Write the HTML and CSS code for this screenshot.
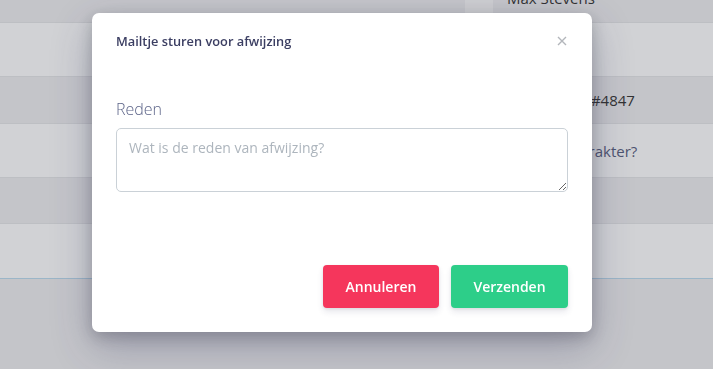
FILE: index.html
```html
<!DOCTYPE html>
<html lang="nl">
<head>
    <meta charset="UTF-8">
    <meta name="viewport" content="width=device-width, initial-scale=1.0">
    <title>Aanvragen</title>
    <link rel="stylesheet" href="styles.css">
</head>
<body>
    <!-- table behind the modal -->
    <div class="table">
        <div class="row row-top">
            <div class="cell-gap"></div>
            <div class="cell">Max Stevens</div>
        </div>
        <div class="row row-light"></div>
        <div class="row row-dark">
            <div class="cell-gap"></div>
            <div class="cell">Discord: Pat#4847</div>
        </div>
        <div class="row row-light">
            <div class="cell-gap"></div>
            <div class="cell cell-question">Wat is je karakter?</div>
        </div>
        <div class="row row-dark"></div>
        <div class="row row-light row-last"></div>
    </div>

    <div class="backdrop"></div>

    <!-- Modal -->
    <div class="modal-wrap">
        <div class="modal">
            <div class="modal-header">
                <h5 class="modal-title">Mailtje sturen voor afwijzing</h5>
                <button class="close" type="button" aria-label="Sluiten">
                    <svg width="10" height="10" viewBox="0 0 10 10">
                        <path d="M1 1L9 9M9 1L1 9" stroke="#b3b6bb" stroke-width="1.4" fill="none"/>
                    </svg>
                </button>
            </div>
            <div class="modal-body">
                <label for="reden">Reden</label>
                <textarea id="reden" placeholder="Wat is de reden van afwijzing?"></textarea>
            </div>
            <div class="modal-footer">
                <button class="btn btn-danger" type="button">Annuleren</button>
                <button class="btn btn-success" type="button">Verzenden</button>
            </div>
        </div>
    </div>
</body>
</html>
```

FILE: styles.css
```css
* {
    box-sizing: border-box;
}

body {
    margin: 0;
    height: 369px;
    overflow: hidden;
    font-family: 'Open Sans', 'Liberation Sans', sans-serif;
    background-color: #ebecf0;
}

.table {
    width: 100%;
}

.row {
    display: flex;
    align-items: center;
    border-bottom: 1px solid #e2e4e8;
}

.row-top {
    height: 23px;
    background-color: #ebecf0;
}

.row-top .cell {
    margin-top: -27px;
}

.row-light {
    height: 54px;
    background-color: #fafcfe;
}

.row-dark {
    height: 47px;
    background-color: #ebecf0;
}

.row:nth-child(4) {
    height: 54px;
}

.row:nth-child(5) {
    height: 46px;
}

.row-last {
    height: 55px;
    border-bottom-color: #b9d9ee;
}

.cell-gap {
    width: 465px;
    align-self: stretch;
}

.row-top .cell-gap {
    width: 493px;
    background: linear-gradient(to right, transparent 465px, #f6f7f9 465px);
}

.cell {
    padding-left: 42px;
    font-size: 15px;
    color: #3a3a3a;
    white-space: nowrap;
}

.row-top .cell {
    padding-left: 14px;
}

.cell-question {
    padding-left: 45px;
    color: #5a6384;
}

.backdrop {
    position: fixed;
    inset: 0;
    background-color: rgba(20, 22, 30, 0.18);
}

.modal-wrap {
    position: fixed;
    inset: 0;
    padding: 13px 0 0 92px;
}

.modal {
    width: 500px;
    height: 319px;
    background: white;
    border-radius: 7px;
    box-shadow: 0 15px 40px rgba(50, 50, 93, 0.3), 0 5px 15px rgba(0, 0, 0, 0.2);
    display: flex;
    flex-direction: column;
}

.modal-header {
    display: flex;
    align-items: center;
    justify-content: space-between;
    padding: 18px 24px 0;
}

.modal-title {
    margin: 0;
    font-size: 12.8px;
    font-weight: 600;
    line-height: 20px;
    color: #3b3e62;
}

.close {
    border: none;
    background: none;
    padding: 0;
    width: 10px;
    height: 10px;
    margin-right: 1px;
    display: flex;
}

.modal-body {
    padding: 0 24px;
    margin-top: 47px;
}

label {
    display: block;
    font-size: 16px;
    font-weight: 300;
    line-height: 22px;
    color: #5c6488;
    margin-bottom: 8px;
}

textarea {
    display: block;
    width: 100%;
    height: 64px;
    padding: 9px 12px;
    border: 1px solid #cad1d7;
    border-radius: 5px;
    font-family: inherit;
    font-size: 14px;
    color: #525f7f;
    resize: vertical;
}

textarea::placeholder {
    color: #adb5bd;
}

.modal-footer {
    margin-top: auto;
    padding: 0 24px 24px;
    display: flex;
    justify-content: flex-end;
    gap: 12px;
}

.btn {
    border: none;
    border-radius: 4px;
    height: 43px;
    padding: 0 20px;
    font-family: inherit;
    font-size: 14px;
    font-weight: 600;
    color: white;
    box-shadow: 0 4px 6px rgba(50, 50, 93, 0.11), 0 1px 3px rgba(0, 0, 0, 0.08);
    cursor: pointer;
}

.btn-danger {
    width: 116px;
    background-color: #f5365c;
}

.btn-success {
    width: 117px;
    background-color: #2dce89;
}
```
